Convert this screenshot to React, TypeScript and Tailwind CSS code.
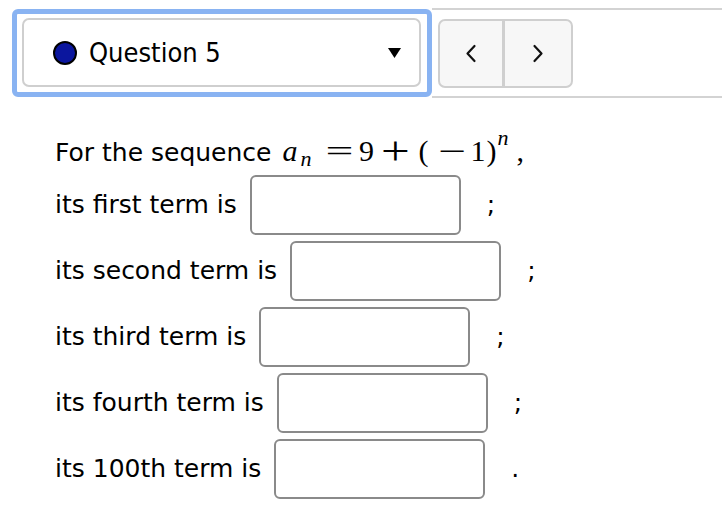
import React from 'react';

type Term = { label: string; end: string };

const terms: Term[] = [
  { label: 'its first term is', end: ';' },
  { label: 'its second term is', end: ';' },
  { label: 'its third term is', end: ';' },
  { label: 'its fourth term is', end: ';' },
  { label: 'its 100th term is', end: '.' },
];

// one math glyph in a fixed-width cell, so the formula keeps its spacing
const Cell = ({ w, className = '', children }: { w: string; className?: string; children?: React.ReactNode }) => (
  <span className={`${w} shrink-0 text-center leading-[32px] ${className}`}>{children}</span>
);

const Formula = () => (
  <span className="ml-[10px] flex items-baseline font-['Liberation_Serif',serif] text-[30px]">
    <Cell w="w-[17px]" className="italic">a</Cell>
    <Cell w="w-[15px]" className="italic text-[22px] relative top-[5px]">n</Cell>
    <Cell w="w-[9px]" />
    <Cell w="w-[33px]">
      <span className="inline-block scale-x-[1.65]">=</span>
    </Cell>
    <Cell w="w-[22px]">9</Cell>
    <Cell w="w-[35px]">
      <span className="inline-block scale-x-[1.7] scale-y-[1.3]">+</span>
    </Cell>
    <Cell w="w-[22px]">(</Cell>
    <Cell w="w-[35px]">
      <span className="inline-block scale-x-[1.65]">−</span>
    </Cell>
    <Cell w="w-[17px]">1</Cell>
    <Cell w="w-[9px]">)</Cell>
    <Cell w="w-[15px]" className="italic text-[22px] relative top-[-16px]">n</Cell>
    <Cell w="w-[14px]" className="text-left pl-[6px]">,</Cell>
  </span>
);

const Chevron = ({ dir }: { dir: 'left' | 'right' }) => (
  <svg width="12" height="19" viewBox="0 0 12 19" fill="none" stroke="#111" strokeWidth="2.2" strokeLinecap="round" strokeLinejoin="round">
    {dir === 'left' ? <polyline points="9.5,2 2.5,9.5 9.5,17" /> : <polyline points="2.5,2 9.5,9.5 2.5,17" />}
  </svg>
);

export default function App() {
  return (
    <div className="w-[722px] h-[514px] overflow-hidden bg-white text-black font-['DejaVu_Sans',sans-serif]">
      {/* question picker + prev/next */}
      <div className="flex items-center pt-[8px]">
        <div className="ml-[12px] w-[420px] h-[88px] border-[5px] border-[#89b3f2] rounded-[6px] pl-[5px] pr-[6px] pt-[4px] pb-[5px]">
          <div className="h-full border-2 border-[#cfcfcf] rounded-[7px] flex items-center pl-[29px] pr-[18px]">
            <span className="w-[24px] h-[24px] rounded-full bg-[#0b169e] border-[2.5px] border-black" />
            <span className="ml-[12px] text-[27px] font-['DejaVu_Sans_Condensed','DejaVu_Sans',sans-serif] font-stretch-condensed leading-none">
              Question 5
            </span>
            <span className="flex-1" />
            <svg width="13" height="10" viewBox="0 0 13 10">
              <polygon points="0,0 13,0 6.5,10" fill="#000" />
            </svg>
          </div>
        </div>
        <div className="flex-1 h-[90px] border-y-2 border-[#d3d3d3] flex items-center pl-[6px]">
          <div className="flex h-[69px] w-[135px] border-2 border-[#cfcfcf] rounded-[7px] bg-[#f7f7f7] overflow-hidden">
            <button className="w-[65px] h-full flex items-center justify-center border-r-[3px] border-[#cfcfcf]">
              <Chevron dir="left" />
            </button>
            <button className="flex-1 h-full flex items-center justify-center">
              <Chevron dir="right" />
            </button>
          </div>
        </div>
      </div>

      {/* problem text */}
      <div className="pl-[55px] mt-[37px] text-[25px]">
        <div className="flex items-baseline h-[32px]">
          <span className="leading-[32px]">For the sequence</span>
          <Formula />
        </div>
        <div className="mt-[5px]">
          {terms.map((t) => (
            <div key={t.label} className="flex items-center h-[66px]">
              <span className="leading-[32px]">{t.label}</span>
              <input className="ml-[13px] w-[211px] h-[60px] border-2 border-[#8a8a8a] rounded-[6px] bg-white outline-none" />
              <span className="ml-[26px] leading-[32px]">{t.end}</span>
            </div>
          ))}
        </div>
      </div>
    </div>
  );
}
